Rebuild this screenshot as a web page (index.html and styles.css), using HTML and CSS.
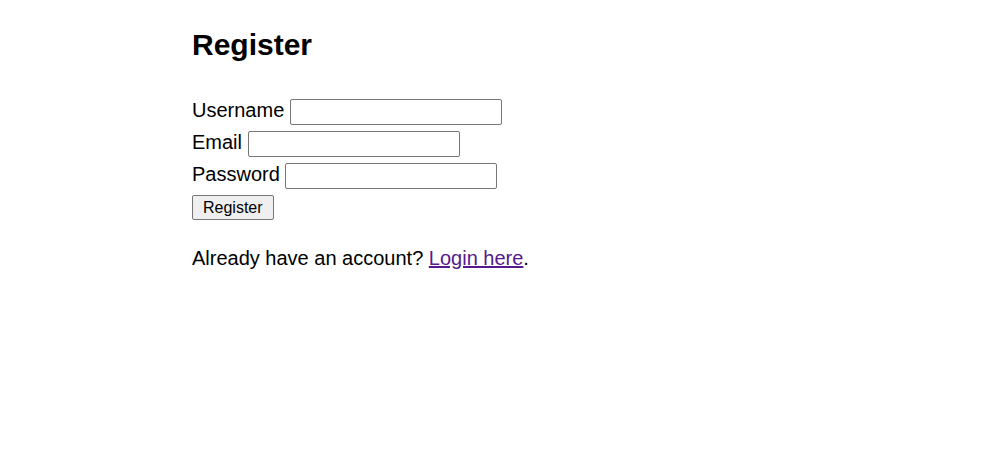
FILE: index.html
```html
<!DOCTYPE html>
<html lang="en">
<head>
<meta charset="utf-8">
<title>Register</title>
<link rel="stylesheet" href="styles.css">
</head>
<body>
<main class="page">
  <h2 class="title">Register</h2>
  <form class="form">
    <div class="row">
      <label for="username">Username</label>
      <input class="field" type="text" id="username" name="username">
    </div>
    <div class="row">
      <label for="email">Email</label>
      <input class="field" type="email" id="email" name="email">
    </div>
    <div class="row">
      <label for="password">Password</label>
      <input class="field" type="password" id="password" name="password">
    </div>
    <div class="row">
      <button class="btn" type="submit">Register</button>
    </div>
  </form>
  <p class="note">Already have an account? <a class="link" href="#">Login here</a>.</p>
</main>
</body>
</html>
```

FILE: styles.css
```css
html, body {
  margin: 0;
  padding: 0;
  background: #ffffff;
}

body {
  font-family: "Liberation Sans", Arial, sans-serif;
  font-size: 20px;
  color: #000000;
}

.page {
  max-width: 617px;
  margin: 0 auto;
  padding-top: 28px;
}

.title {
  margin: 0;
  font-size: 30px;
  line-height: 34px;
  font-weight: bold;
}

.form {
  margin-top: 37px;
}

.row {
  display: flex;
  align-items: baseline;
  gap: 5.56px;
  margin-bottom: 6px;
}

.field {
  box-sizing: border-box;
  width: 212px;
  height: 26px;
  padding: 1px 2px;
  border: 1px solid #767676;
  border-radius: 2px;
  background: #ffffff;
  font-family: "Liberation Sans", Arial, sans-serif;
  font-size: 16px;
}

.btn {
  box-sizing: border-box;
  height: 25px;
  padding: 1px 10px;
  border: 1px solid #767676;
  border-radius: 2px;
  background: #efefef;
  color: #000000;
  font-family: "Liberation Sans", Arial, sans-serif;
  font-size: 16px;
  line-height: 19px;
}

.note {
  margin: 27px 0 0;
  line-height: 23px;
}

.link {
  color: #551a8b;
  text-decoration: underline;
}
```
